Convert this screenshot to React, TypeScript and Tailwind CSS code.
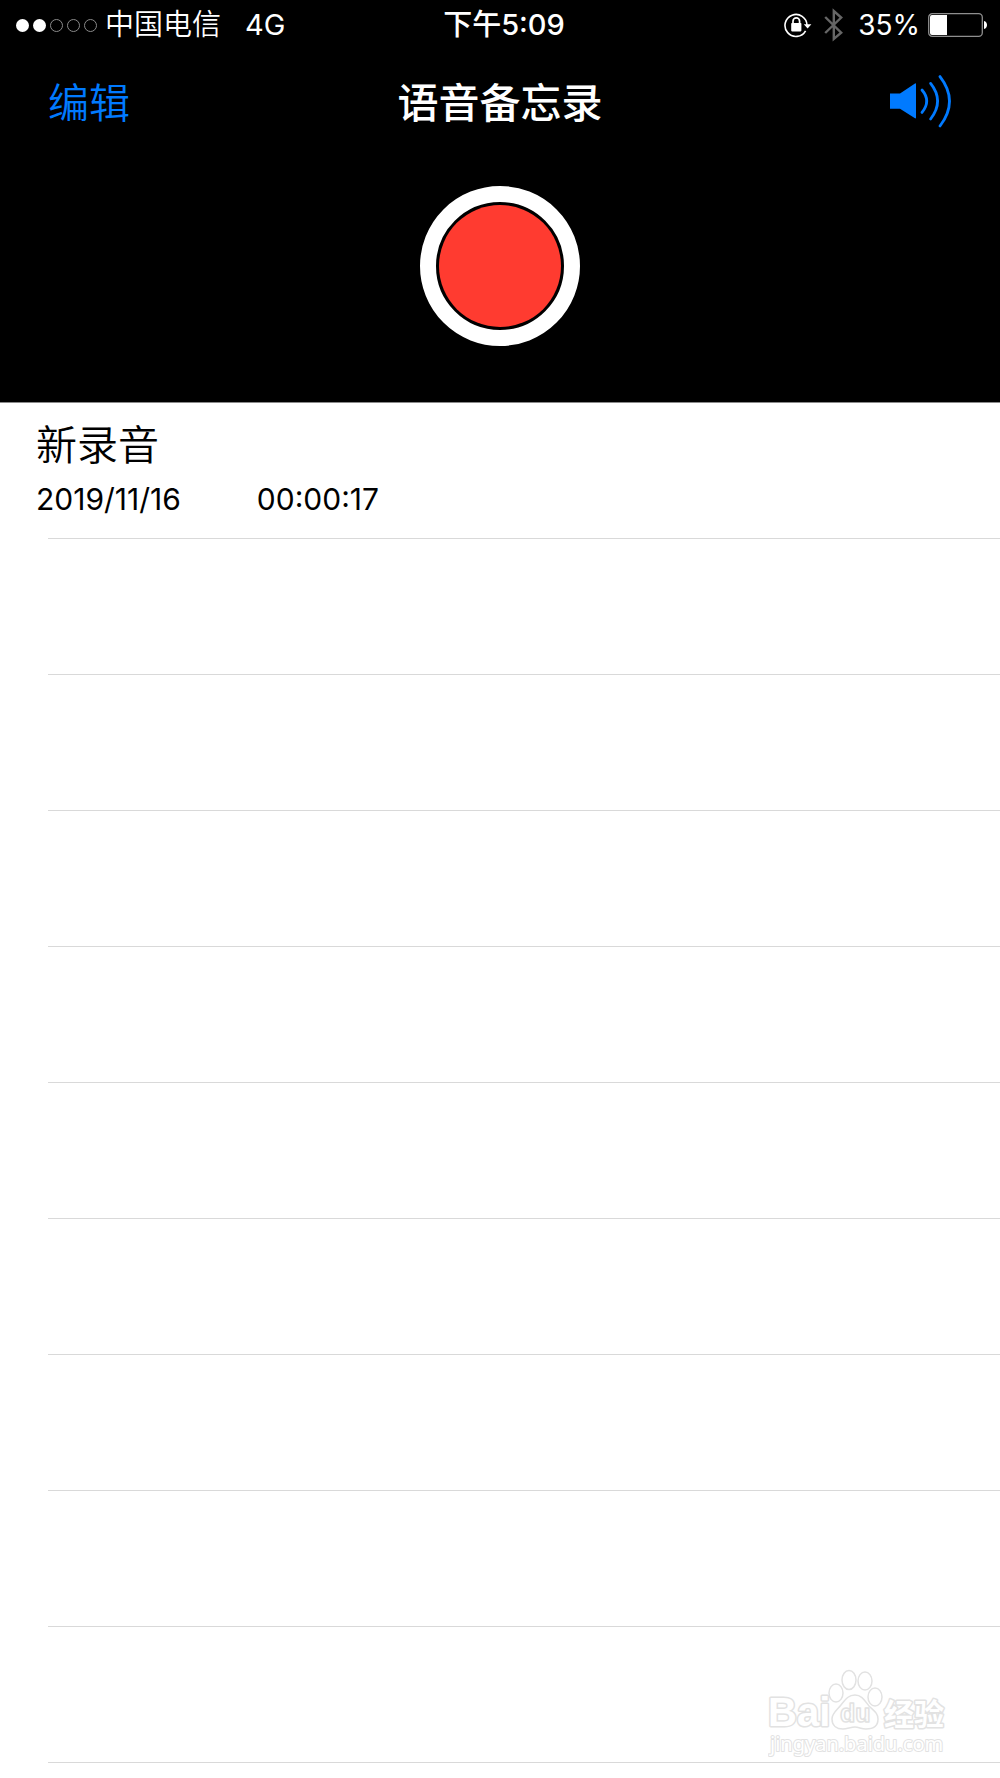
const recordings = [{ title: "新录音", date: "2019/11/16", duration: "00:00:17" }];

const EMPTY_ROWS = 9;

function SignalDots() {
  return (
    <div className="flex gap-1">
      {[0, 1, 2, 3, 4].map((i) => (
        <span
          key={i}
          className={
            i < 2
              ? "size-[13px] rounded-full bg-white"
              : "size-[13px] rounded-full border border-[#8a8a8a]"
          }
        />
      ))}
    </div>
  );
}

function RotationLockIcon() {
  return (
    <svg width="28" height="26" viewBox="0 0 28 26" fill="none">
      <path
        d="M21.6 18.8A11 11 0 1 1 23 13.2"
        stroke="white"
        strokeWidth="1.6"
      />
      <path d="M19.8 12.2h7.6l-3.8 4.4z" fill="white" />
      <rect x="7.2" y="11" width="10.2" height="8.4" rx="0.8" fill="white" />
      <path
        d="M9 12V9.2a3.3 3.3 0 0 1 6.6 0V12"
        stroke="white"
        strokeWidth="1.7"
      />
    </svg>
  );
}

function BluetoothIcon() {
  return (
    <svg width="20" height="34" viewBox="0 0 20 34" fill="none">
      <path
        d="M1.2 9L17.2 24.6L9.8 31V3L17.2 9.6L1.2 25"
        stroke="#666666"
        strokeWidth="2.4"
      />
    </svg>
  );
}

function BatteryIcon() {
  return (
    <svg width="60" height="24" viewBox="0 0 60 24" fill="none">
      <rect
        x="0.7"
        y="0.7"
        width="53.6"
        height="22.6"
        rx="3.6"
        stroke="#8e8e8e"
        strokeWidth="1.3"
      />
      <path d="M4 2H19V22H4A2 2 0 0 1 2 20V4A2 2 0 0 1 4 2Z" fill="white" />
      <path d="M56 8C60 9 60 15 56 16Z" fill="white" />
    </svg>
  );
}

function SpeakerIcon() {
  return (
    <svg width="62" height="54" viewBox="0 0 62 54" fill="none">
      <path
        d="M0 19.6H10L25 9.4Q26 8.9 26 10V43.6Q26 44.8 25 44.2L10 34.8H0Z"
        fill="#007aff"
      />
      <g stroke="#007aff" strokeWidth="2.8" strokeLinecap="round">
        <path d="M32 16Q41.4 27 32 38.4" />
        <path d="M40.6 9.4Q54.6 27 40.6 45" />
        <path d="M50 2.6Q69 27 50 52" />
      </g>
    </svg>
  );
}

function StatusBar() {
  return (
    <div className="grid h-[50px] grid-cols-[1fr_auto_1fr] items-center pl-4 pr-3 text-[29px] leading-[50px]">
      <div className="flex items-center gap-2">
        <SignalDots />
        <span className="font-[350]">中国电信</span>
        <span className="pl-4">4G</span>
      </div>
      <div className="pl-1 font-medium">下午5:09</div>
      <div className="flex items-center justify-end">
        <RotationLockIcon />
        <span className="pl-3">
          <BluetoothIcon />
        </span>
        <span className="pl-3.5 pr-2 text-[28px]">35%</span>
        <BatteryIcon />
      </div>
    </div>
  );
}

function Watermark() {
  return (
    <div className="pointer-events-none absolute right-12 bottom-4">
      <svg
        width="184"
        height="94"
        viewBox="0 0 184 94"
        fill="white"
        stroke="#e2e2e2"
        strokeWidth="1.5"
        strokeLinejoin="round"
        className="font-['Liberation_Sans','Noto_Sans_CJK_SC',sans-serif] font-bold"
      >
        <text x="0" y="58" fontSize="40" paintOrder="stroke" strokeWidth="3">
          Bai
        </text>
        <ellipse cx="68" cy="25" rx="7" ry="9" />
        <ellipse cx="81" cy="12" rx="7" ry="9.5" />
        <ellipse cx="97" cy="13" rx="7" ry="9" />
        <ellipse cx="107" cy="29" rx="7" ry="9" />
        <path d="M87 27C94 27 97 33 101 38C106 43 110 45 110 51C110 59 104 61 98 61C93 61 91 59 87 59C83 59 79 61 75 61C69 61 64 58 64 51C64 45 69 42 73 37C77 32 80 27 87 27Z" />
        <text x="72" y="54" fontSize="25" strokeWidth="1.5">
          du
        </text>
        <text x="116" y="57" fontSize="30" paintOrder="stroke" strokeWidth="3">
          经验
        </text>
        <text
          x="2"
          y="83"
          fontSize="20"
          paintOrder="stroke"
          strokeWidth="2"
          className="font-['Noto_Sans',sans-serif] font-normal"
        >
          jingyan.baidu.com
        </text>
      </svg>
    </div>
  );
}

export default function App() {
  return (
    <main className="relative min-h-screen bg-white font-['Inter','Noto_Sans_CJK_SC',sans-serif] text-black">
      <header className="border-b border-[#8a8a8a] bg-black pb-14 text-white">
        <StatusBar />
        <div className="grid h-[106px] grid-cols-3 items-center px-12 text-[41px] leading-[106px]">
          <button
            type="button"
            className="justify-self-start font-[350] text-[#007aff]"
          >
            编辑
          </button>
          <h1 className="justify-self-center font-medium">语音备忘录</h1>
          <button
            type="button"
            aria-label="扬声器"
            className="justify-self-end pb-1"
          >
            <SpeakerIcon />
          </button>
        </div>
        <div className="flex justify-center pt-[30px]">
          <button
            type="button"
            aria-label="录音"
            className="size-40 rounded-full border-16 border-white p-[3px]"
          >
            <span className="block size-full rounded-full bg-[#ff3b30]" />
          </button>
        </div>
      </header>

      <ul>
        {recordings.map((rec) => (
          <li key={rec.title} className="flex h-[136px] flex-col">
            <div className="flex-1 px-9 pt-3.5">
              <div className="text-[41px] leading-14 font-[350]">
                {rec.title}
              </div>
              <div className="flex gap-[76px] text-[30px] leading-[52px]">
                <span>{rec.date}</span>
                <span>{rec.duration}</span>
              </div>
            </div>
            <div className="ml-12 border-b border-[#d9d9d9]" />
          </li>
        ))}
        {Array.from({ length: EMPTY_ROWS }, (_, i) => (
          <li key={i} className="ml-12 h-[136px] border-b border-[#d9d9d9]" />
        ))}
      </ul>

      <Watermark />
    </main>
  );
}
